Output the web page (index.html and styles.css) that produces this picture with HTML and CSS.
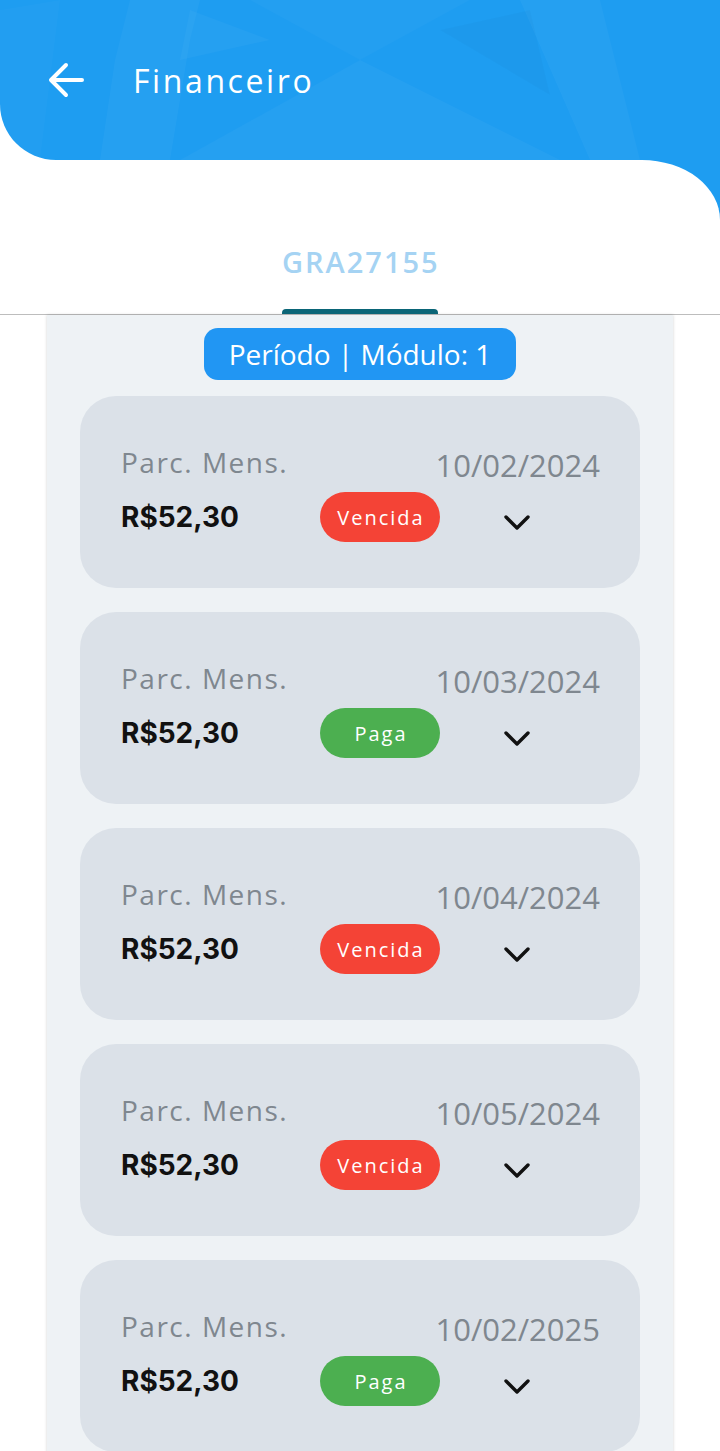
FILE: index.html
```html
<!DOCTYPE html>
<html lang="pt-BR">
<head>
<meta charset="utf-8">
<title>Financeiro</title>
<link rel="stylesheet" href="styles.css">
</head>
<body>
<div class="app">
  <header class="topbar">
    <svg class="decor" viewBox="0 0 720 160" preserveAspectRatio="none" aria-hidden="true">
      <polygon points="130,0 200,0 190,40 170,160 100,160 115,60" fill="rgba(255,255,255,0.035)"/>
      <polygon points="190,10 270,40 180,60" fill="rgba(255,255,255,0.03)"/>
      <polygon points="250,0 470,0 360,60" fill="rgba(255,255,255,0.025)"/>
      <polygon points="180,160 360,60 560,160" fill="rgba(255,255,255,0.03)"/>
      <polygon points="440,30 530,10 550,95" fill="rgba(0,0,0,0.02)"/>
      <polygon points="520,0 600,0 640,160 590,160" fill="rgba(255,255,255,0.035)"/>
      <polygon points="0,10 60,0 40,160 0,160" fill="rgba(255,255,255,0.02)"/>
    </svg>
    <button class="back" aria-label="Voltar">
      <svg viewBox="0 0 36 36" width="36" height="36"><path d="M34 18H4M18 3L3 18l15 15" fill="none" stroke="#fff" stroke-width="4" stroke-linecap="round" stroke-linejoin="round"/></svg>
    </button>
    <h1 class="title">Financeiro</h1>
  </header>
  <div class="curve-wrap">
    <nav class="tabs">
      <div class="tab">GRA27155<span class="indicator"></span></div>
    </nav>
  </div>
  <main class="panel">
    <div class="period">Período | Módulo: 1</div>
    <div class="cards">
      <article class="card">
        <div class="row top"><span class="label">Parc. Mens.</span><span class="date">10/02/2024</span></div>
        <div class="row bottom"><span class="amount">R$52,30</span><span class="pill red">Vencida</span><span class="chev"><svg viewBox="0 0 28 18" width="28" height="18"><path d="M3 3l11 11L25 3" fill="none" stroke="#111" stroke-width="3.4" stroke-linecap="round" stroke-linejoin="round"/></svg></span></div>
      </article>
      <article class="card">
        <div class="row top"><span class="label">Parc. Mens.</span><span class="date">10/03/2024</span></div>
        <div class="row bottom"><span class="amount">R$52,30</span><span class="pill green">Paga</span><span class="chev"><svg viewBox="0 0 28 18" width="28" height="18"><path d="M3 3l11 11L25 3" fill="none" stroke="#111" stroke-width="3.4" stroke-linecap="round" stroke-linejoin="round"/></svg></span></div>
      </article>
      <article class="card">
        <div class="row top"><span class="label">Parc. Mens.</span><span class="date">10/04/2024</span></div>
        <div class="row bottom"><span class="amount">R$52,30</span><span class="pill red">Vencida</span><span class="chev"><svg viewBox="0 0 28 18" width="28" height="18"><path d="M3 3l11 11L25 3" fill="none" stroke="#111" stroke-width="3.4" stroke-linecap="round" stroke-linejoin="round"/></svg></span></div>
      </article>
      <article class="card">
        <div class="row top"><span class="label">Parc. Mens.</span><span class="date">10/05/2024</span></div>
        <div class="row bottom"><span class="amount">R$52,30</span><span class="pill red">Vencida</span><span class="chev"><svg viewBox="0 0 28 18" width="28" height="18"><path d="M3 3l11 11L25 3" fill="none" stroke="#111" stroke-width="3.4" stroke-linecap="round" stroke-linejoin="round"/></svg></span></div>
      </article>
      <article class="card">
        <div class="row top"><span class="label">Parc. Mens.</span><span class="date">10/02/2025</span></div>
        <div class="row bottom"><span class="amount">R$52,30</span><span class="pill green">Paga</span><span class="chev"><svg viewBox="0 0 28 18" width="28" height="18"><path d="M3 3l11 11L25 3" fill="none" stroke="#111" stroke-width="3.4" stroke-linecap="round" stroke-linejoin="round"/></svg></span></div>
      </article>
    </div>
  </main>
</div>
</body>
</html>
```
FILE: styles.css
```css
* { box-sizing: border-box; }
html, body { margin: 0; padding: 0; }
body {
  background: #fff;
  font-family: "Open Sans", "Noto Sans", sans-serif;
  width: 720px;
  height: 1451px;
  overflow: hidden;
}
.app { width: 720px; }

.topbar {
  position: relative;
  height: 160px;
  background: #1e9df1;
  border-bottom-left-radius: 56px;
  display: flex;
  align-items: center;
  padding-left: 48px;
  overflow: hidden;
}
.decor { position: absolute; inset: 0; width: 100%; height: 100%; }
.back {
  position: relative;
  background: none;
  border: 0;
  padding: 0;
  width: 36px;
  height: 36px;
  display: flex;
}
.title {
  position: relative;
  margin: 0 0 0 49px;
  color: #fff;
  font-weight: 400;
  font-size: 32px;
  letter-spacing: 2.6px;
}

.curve-wrap { background: #1e9df1; }
.tabs {
  background: #fff;
  height: 155px;
  border-top-right-radius: 78px 60px;
  border-bottom: 1.5px solid #bdbdbd;
  display: flex;
  justify-content: center;
  align-items: flex-end;
}
.tab {
  position: relative;
  width: 156px;
  text-align: center;
  color: #a5d3f3;
  font-weight: 600;
  font-size: 29px;
  letter-spacing: 2px;
  padding-bottom: 32px;
  line-height: 40px;
}
.indicator {
  position: absolute;
  left: 0; right: 0; bottom: 0;
  height: 5px;
  background: #0a6577;
  border-radius: 4px 4px 0 0;
}

.panel {
  margin: 0 47px;
  background: #eef2f5;
  box-shadow: 0 0 3px rgba(0,0,0,0.18);
  padding: 13px 33px 0;
  min-height: 1140px;
  display: flex;
  flex-direction: column;
  align-items: center;
}
.period {
  background: #2196f3;
  color: #fff;
  font-size: 28px;
  height: 52px;
  line-height: 52px;
  border-radius: 14px;
  width: 312px;
  text-align: center;
  white-space: nowrap;
}
.cards {
  margin-top: 16px;
  display: flex;
  flex-direction: column;
  gap: 24px;
  width: 560px;
}
.card {
  background: #dbe1e8;
  border-radius: 36px;
  height: 192px;
  padding: 46px 40px 0 41px;
}
.row { display: flex; align-items: center; }
.top { height: 40px; justify-content: space-between; align-items: baseline; }
.label { color: #7f878f; font-size: 28px; letter-spacing: 1.5px; position: relative; top: -2px; }
.date { color: #7f878f; font-size: 31px; position: relative; top: 2px; }
.bottom { margin-top: 10px; height: 50px; }
.amount {
  width: 199px;
  font-family: Inter, Roboto, sans-serif;
  font-weight: 700;
  font-size: 28px;
  color: #111;
}
.pill {
  width: 120px;
  height: 50px;
  border-radius: 25px;
  color: #fff;
  font-size: 20px;
  letter-spacing: 2px;
  padding-left: 2px;
  display: flex;
  align-items: center;
  justify-content: center;
}
.red { background: #f44336; }
.green { background: #4caf50; }
.chev { margin-left: 63px; margin-top: 12px; display: flex; }
```
